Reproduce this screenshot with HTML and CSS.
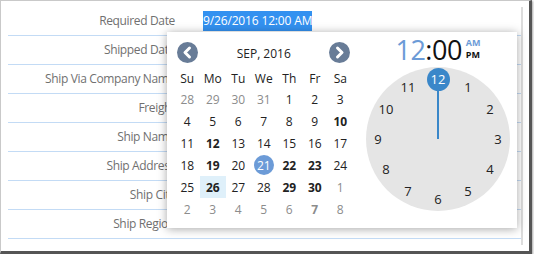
FILE: index.html
```html
<!DOCTYPE html>
<html>
<head>
<meta charset="utf-8">
<link rel="stylesheet" href="styles.css">
</head>
<body>
<div class="frame">
  <div class="form">
    <div class="row"><div class="label">Required Date</div><div class="value"><span class="sel">9/26/2016 12:00 AM</span></div></div>
    <div class="row"><div class="label">Shipped Date</div><div class="value"></div></div>
    <div class="row"><div class="label">Ship Via Company Name</div><div class="value"></div></div>
    <div class="row"><div class="label">Freight</div><div class="value"></div></div>
    <div class="row"><div class="label">Ship Name</div><div class="value"></div></div>
    <div class="row"><div class="label">Ship Address</div><div class="value"></div></div>
    <div class="row"><div class="label">Ship City</div><div class="value"></div></div>
    <div class="row"><div class="label">Ship Region</div><div class="value"></div></div>
  </div>
  <div class="popup">
    <div class="cal">
      <div class="nav">
        <span class="navbtn"><svg width="21" height="21" viewBox="0 0 21 21"><circle cx="10.5" cy="10.5" r="10.5" fill="#687c97"/><path d="M12.5 6 L8 10.5 L12.5 15" fill="none" stroke="#fff" stroke-width="3" stroke-linecap="round" stroke-linejoin="round"/></svg></span>
        <span class="title">SEP, 2016</span>
        <span class="navbtn"><svg width="21" height="21" viewBox="0 0 21 21"><circle cx="10.5" cy="10.5" r="10.5" fill="#687c97"/><path d="M8.5 6 L13 10.5 L8.5 15" fill="none" stroke="#fff" stroke-width="3" stroke-linecap="round" stroke-linejoin="round"/></svg></span>
      </div>
      <div class="grid">
        <span class="dh">Su</span><span class="dh">Mo</span><span class="dh">Tu</span><span class="dh">We</span><span class="dh">Th</span><span class="dh">Fr</span><span class="dh">Sa</span>
        <span class="d other">28</span><span class="d other">29</span><span class="d other">30</span><span class="d other">31</span><span class="d">1</span><span class="d">2</span><span class="d">3</span>
        <span class="d">4</span><span class="d">5</span><span class="d">6</span><span class="d">7</span><span class="d">8</span><span class="d">9</span><span class="d b">10</span>
        <span class="d">11</span><span class="d b">12</span><span class="d">13</span><span class="d">14</span><span class="d">15</span><span class="d">16</span><span class="d">17</span>
        <span class="d">18</span><span class="d b">19</span><span class="d">20</span><span class="d today"><span class="dot">21</span></span><span class="d b">22</span><span class="d b">23</span><span class="d">24</span>
        <span class="d">25</span><span class="d b sel-day">26</span><span class="d">27</span><span class="d">28</span><span class="d b">29</span><span class="d b">30</span><span class="d other">1</span>
        <span class="d other">2</span><span class="d other">3</span><span class="d other">4</span><span class="d other">5</span><span class="d other">6</span><span class="d other b">7</span><span class="d other">8</span>
      </div>
    </div>
    <div class="clock">
      <div class="time">
        <span class="digits"><span class="hh">12</span>:00</span>
        <span class="ampm"><span class="am">AM</span><span class="pm">PM</span></span>
      </div>
      <div class="face">
        <span class="hand"></span>
        <span class="num n12">12</span>
        <span class="num n1">1</span>
        <span class="num n2">2</span>
        <span class="num n3">3</span>
        <span class="num n4">4</span>
        <span class="num n5">5</span>
        <span class="num n6">6</span>
        <span class="num n7">7</span>
        <span class="num n8">8</span>
        <span class="num n9">9</span>
        <span class="num n10">10</span>
        <span class="num n11">11</span>
      </div>
    </div>
  </div>
</div>
</body>
</html>
```
FILE: styles.css
```css
html, body {
  margin: 0;
  padding: 0;
  background: #fff;
}
body {
  font-family: "Open Sans", "Noto Sans", sans-serif;
  font-size: 12px;
  color: #222;
}
.frame {
  position: relative;
  width: 528px;
  height: 250px;
  border-top: 1px solid #c9c9c9;
  border-left: 1px solid #c9c9c9;
  border-right: 3px solid #555;
  border-bottom: 3px solid #555;
  box-shadow: 1px 1px 2px rgba(0,0,0,0.35);
  background: #fff;
}
.form {
  margin-left: 7px;
  margin-top: 6px;
  width: 513px;
  height: 238px;
  border-right: 2px solid #dcdcdc;
}
.row {
  display: flex;
  align-items: center;
  height: 28px;
  border-bottom: 1px solid #c3dbf5;
}
.label {
  width: 167px;
  text-align: right;
  color: #707070;
  white-space: nowrap;
  letter-spacing: -0.35px;
  padding-bottom: 1px;
}
.value {
  margin-left: 28px;
  padding-bottom: 1px;
}
.sel {
  background: #3391f0;
  color: #fff;
  padding: 1px 0 2px;
  letter-spacing: -0.15px;
}
.popup {
  position: absolute;
  left: 166px;
  top: 31px;
  width: 350px;
  height: 196px;
  background: #fff;
  box-shadow: 0 1px 9px rgba(0,0,0,0.35);
  display: flex;
  z-index: 2;
}
.cal {
  padding: 10px 0 0 7.5px;
  width: 178.5px;
}
.nav {
  display: flex;
  align-items: center;
  justify-content: space-between;
  height: 21px;
  padding: 0 2.5px;
}
.navbtn {
  display: flex;
  width: 21px;
  height: 21px;
}
.title {
  font-size: 12px;
  color: #222;
  padding-top: 2px;
}
.grid {
  margin-top: 5px;
  display: grid;
  grid-template-columns: repeat(7, 25.5px);
  grid-template-rows: 20px repeat(6, 22px);
}
.dh, .d {
  display: flex;
  align-items: center;
  justify-content: center;
}
.dh {
  color: #222;
}
.d {
  color: #222;
}
.d.other {
  color: #8c8c8c;
}
.d.b {
  font-weight: 700;
}
.sel-day {
  background: #dff0fa;
}
.dot {
  display: flex;
  align-items: center;
  justify-content: center;
  width: 20px;
  height: 20px;
  border-radius: 50%;
  background: #6c9bd7;
  color: #fff;
}
.clock {
  margin-left: 13px;
  width: 144px;
  display: flex;
  flex-direction: column;
}
.time {
  height: 35px;
  display: flex;
  align-items: center;
  justify-content: center;
  gap: 4px;
}
.digits {
  font-size: 27px;
  line-height: 30px;
  color: #111;
  letter-spacing: -0.5px;
}
.hh {
  color: #6c9bd7;
}
.ampm {
  display: flex;
  flex-direction: column;
  font-size: 9px;
  font-weight: 700;
  line-height: 12px;
  margin-top: -2px;
}
.am { color: #6c9bd7; }
.pm { color: #111; }
.face {
  position: relative;
  width: 144px;
  height: 144px;
  border-radius: 50%;
  background: #e5e5e5;
}
.hand {
  position: absolute;
  left: 71px;
  top: 12px;
  width: 2px;
  height: 60px;
  background: #3a87c9;
}
.num {
  position: absolute;
  width: 24px;
  height: 24px;
  margin: -12px 0 0 -12px;
  display: flex;
  align-items: center;
  justify-content: center;
  font-size: 13px;
  color: #222;
}
.n12 { left: 72px; top: 12px; width: 23px; height: 23px; margin: -11.5px 0 0 -11.5px; background: #3a87c9; color: #fff; border-radius: 50%; }
.n1 { left: 102px; top: 20px; }
.n2 { left: 124px; top: 42px; }
.n3 { left: 132px; top: 72px; }
.n4 { left: 124px; top: 102px; }
.n5 { left: 102px; top: 124px; }
.n6 { left: 72px; top: 132px; }
.n7 { left: 42px; top: 124px; }
.n8 { left: 20px; top: 102px; }
.n9 { left: 12px; top: 72px; }
.n10 { left: 20px; top: 42px; }
.n11 { left: 42px; top: 20px; }
```
